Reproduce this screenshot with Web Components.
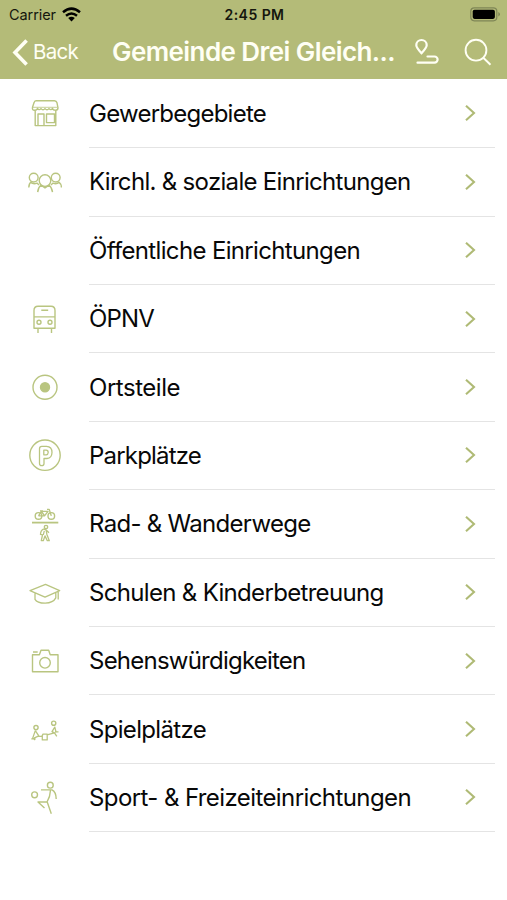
<!DOCTYPE html>
<html lang="de">
<head>
<meta charset="utf-8">
<title>Gemeinde Drei Gleichen</title>
<style>
    body {
        margin: 0;
        background: #fff;
        font-family: Inter, "Liberation Sans", sans-serif;
        --accent: #b4bb78;
        --icon: #b9c580;
    }
</style>
</head>
<body>
<category-page></category-page>

<script>
// Each icon: vertical shift inside its box, then its shapes
const ICONS = {
    shop: [1.3, `<path d="M16 10.5H34.5Q36.4 10.5 37 12.5L38 17.5Q38 20 35.5 20Q33 20 32.5 18Q31 20.5 29 18.3Q27 20.5 25 18.3Q23 20.5 21 18.3Q19 20.5 17.5 18Q17 20 14.5 20Q12 20 12.5 17L14 12.5Q14.5 10.5 16 10.5Z"/><path d="M13 17H37.5" stroke-width=".8"/><path d="M15.2 20V35.3H35.8V20M18 35V23.7H24V35M26.5 23.7H34.5V32.3H26.5Z"/>`],
    people: [.6, `<circle cx="25" cy="23" r="5.8"/><circle cx="13.7" cy="20" r="4.4"/><circle cx="35.7" cy="20" r="4.4"/><path d="M8.8 29.8Q8.8 26 11.2 24.2M10.6 24.8Q13.5 27 17 25.5L19 27.5M31 27.5L33 25.5Q36.5 27 39 24.8M38.4 24.2Q41.4 26 41.4 29.8M17.7 34.5Q18 29.8 21 27.6L25 30.4L29 27.6Q32 29.8 32.5 34.5"/>`],
    bus: [.9, `<path d="M14 33.3V15.5Q14 11.3 18 11.3H31Q35 11.3 35 15.5V33.3ZM14 22H35M21.3 15.4H28.2M18 33.5V38M31.5 33.5V38"/><circle cx="19" cy="27.4" r="2"/><circle cx="30" cy="27.4" r="2"/>`],
    place: [.5, `<circle cx="25" cy="23.7" r="12"/><circle cx="25" cy="23.7" r="4.5" fill="currentColor"/>`],
    parking: [-.8, `<circle cx="25" cy="25" r="15.2"/><path d="M19.5 18.5Q19.5 16.2 21.8 16.2H26.5Q32 16.5 32 22.2Q31.8 27.8 27 28.3H24V33.5Q23.8 35.5 21.7 35.5Q19.5 35.3 19.5 33.2ZM23.8 20H26.2Q28.2 20.2 28.2 22.3Q28.1 24.4 26.2 24.6H23.8Z" stroke-width="1.3"/>`],
    routes: [-1.1, `<path d="M12 24.7H38.3" stroke-width="1.8"/><circle cx="18.5" cy="18" r="3.3"/><circle cx="31.3" cy="18" r="3.3"/><path d="M18.5 18L21.5 13.5H28L24.5 18H18.5M21.5 13.5L24.5 18M27 11.5H29.2L31.3 18M20 13H23"/><circle cx="26" cy="29.2" r="1.7"/><path d="M23.8 31Q20.6 32.3 20.5 36.5L22.5 37L21.3 42.8H23.3L25 38L27.3 42.8H29.3L26.8 36.3L26.2 32.2L29 34.8M23.8 31L26.2 32.2M23.3 37L24.3 33" stroke-width="1.3"/>`],
    school: [.4, `<path d="M10 22.2L25.5 16L39.7 22.2L25 28.8ZM15 25V31Q17 34.8 25.2 34.8Q33.2 34.5 35.8 29.5V24.5M38.2 23.5V31" stroke-width="1.3"/>`],
    camera: [.2, `<path d="M12.5 18.5H19.4L21 14H28.7L30.2 18.5H38V35.5H12.5ZM13 15.8H17.7"/><circle cx="25" cy="26.6" r="5.3"/>`],
    playground: [-.4, `<circle cx="16" cy="23" r="2.1"/><circle cx="33.7" cy="18.6" r="2.1"/><path d="M15.3 26L12.7 33.5L15.3 35.3M15.3 26L18.8 31.3L14 33.5M11.3 34.2H15.5M18 31.8L22 31.5L23 29.5H27.2V35.3H22.3V31.5M27 30.2L34.5 28.3L32 27L34.8 22.5L36.2 28M34.5 28.3L36.8 31.8M35 27.2H38.5" stroke-width="1.3"/>`],
    sport: [-.8, `<circle cx="30.3" cy="13" r="2.9"/><circle cx="14.6" cy="22.6" r="2.9"/><path d="M21 17.7H32Q36 19.5 36.2 26.7M30.5 18Q30.2 24.5 27 29.8H18L24.5 35.8M27.3 30L31.3 41.5" stroke-width="1.4"/>`]
};

const CATEGORIES = [
    ["shop", "Gewerbegebiete", 177],
    ["people", "Kirchl. & soziale Einrichtungen", 321.5],
    ["", "Öffentliche Einrichtungen", 271],
    ["bus", "ÖPNV", 65],
    ["place", "Ortsteile", 91],
    ["parking", "Parkplätze", 112],
    ["routes", "Rad- & Wanderwege", 221.5],
    ["school", "Schulen & Kinderbetreuung", 294.5],
    ["camera", "Sehenswürdigkeiten", 216.5],
    ["playground", "Spielplätze", 117],
    ["sport", "Sport- & Freizeiteinrichtungen", 322]
];

// Spreads a label's letters so that it fills the given width
function fitText(el, width, length = el.textContent.length) {
    const natural = el.getBoundingClientRect().width;
    el.style.letterSpacing = (width - natural) / length + "px";
}

class StatusBar extends HTMLElement {
    constructor() {
        super();
        this.attachShadow({ mode: "open" });
    }

    connectedCallback() {
        this.shadowRoot.innerHTML = `
            <style>
                :host {
                    display: grid;
                    grid-template-columns: 1fr auto 1fr;
                    align-items: center;
                    height: 27px;
                    padding: 0 7px 0 9px;
                    box-sizing: border-box;
                    color: #15160d;
                    font-size: 14.5px;
                    line-height: 27px;
                }
                .carrier { display: flex; align-items: center; gap: 6px; }
                .time { font-weight: 600; font-size: 14px; padding-top: 1px; }
                .battery { justify-self: end; }
                svg { display: block; }
            </style>
            <div class="carrier">
                <span>Carrier</span>
                <svg width="19" height="15" viewBox="0 0 19 15" fill="none" stroke="#000" stroke-width="2.5">
                    <path d="M1 5.2Q9.5 -2 18 5.2M4 8.7Q9.5 4.2 15 8.7"/>
                    <path d="M6.2 11.1Q9.5 8.6 12.8 11.1L9.5 14.4Z" fill="#000" stroke="none"/>
                </svg>
            </div>
            <span class="time">2:45 PM</span>
            <svg class="battery" width="30" height="15" viewBox="0 0 30 15">
                <rect x=".8" y=".8" width="26" height="13" rx="3.5" fill="none" stroke="#7f8656" stroke-width="1.2"/>
                <rect x="2.7" y="2.7" width="22.2" height="9.2" rx="1.8"/>
                <path d="M28.3 5Q30 6 30 7.3Q30 8.6 28.3 9.6Z" fill="#7f8656"/>
            </svg>
        `;
        fitText(this.shadowRoot.querySelector(".carrier span"), 47);
        fitText(this.shadowRoot.querySelector(".time"), 60);
    }
}

class NavBar extends HTMLElement {
    constructor() {
        super();
        this.attachShadow({ mode: "open" });
    }

    connectedCallback() {
        this.shadowRoot.innerHTML = `
            <style>
                :host {
                    display: flex;
                    align-items: center;
                    height: 52px;
                    padding: 0 15px 2px 12px;
                    box-sizing: border-box;
                    color: #fffff4;
                }
                .back {
                    display: flex;
                    align-items: center;
                    gap: 4px;
                    width: 100px;
                    font-size: 20.5px;
                    line-height: 50px;
                }
                .title {
                    flex: 1;
                    font-size: 26px;
                    font-weight: 600;
                    line-height: 50px;
                    white-space: nowrap;
                }
                svg { display: block; fill: none; stroke: currentColor; }
                .route { margin-right: 24px; }
            </style>
            <div class="back">
                <svg width="17" height="27" viewBox="0 0 17 27" stroke-width="3.6"><path d="M14.6 1.5L3 13.5L14.6 25.5"/></svg>
                <span>Back</span>
            </div>
            <div class="title"><span>Gemeinde Drei Gleich...</span></div>
            <svg class="route" width="26" height="28" viewBox="0 0 26 28" stroke-width="2.2" stroke-linecap="round">
                <path d="M7.5 15.2Q2.3 9.5 2.3 7.2A5.2 5.2 0 0 1 12.7 7.2Q12.7 9.5 7.5 15.2Z"/>
                <path d="M13.5 18.5H20.5A3.1 3.1 0 0 1 20.5 24.7H3.5"/>
            </svg>
            <svg width="28" height="28" viewBox="0 0 28 28" stroke-width="1.9"><circle cx="12" cy="12.2" r="10.4"/><path d="M19.3 19.7L26.5 26.8"/></svg>
        `;
        fitText(this.shadowRoot.querySelector(".back span"), 45);
        fitText(this.shadowRoot.querySelector(".title span"), 283);
    }
}

class CategoryRow extends HTMLElement {
    constructor() {
        super();
        this.attachShadow({ mode: "open" });
    }

    connectedCallback() {
        const icon = ICONS[this.getAttribute("data-icon")];

        this.shadowRoot.innerHTML = `
            <style>
                :host {
                    display: flex;
                    height: 68.4px;
                    padding: 0 12px 0 20px;
                    box-sizing: border-box;
                    color: #080808;
                    font-size: 24px;
                }
                .icon {
                    flex: none;
                    display: flex;
                    align-items: center;
                    width: 69px;
                    color: var(--icon);
                }
                .content {
                    flex: 1;
                    display: flex;
                    align-items: center;
                    justify-content: space-between;
                    padding-right: 19px;
                    border-bottom: 1px solid #e4e4e4;
                    white-space: nowrap;
                }
                svg { display: block; fill: none; stroke: currentColor; }
                .chevron { color: #afba75; }
            </style>
            <div class="icon">
                ${icon ? `<svg width="60" height="50" viewBox="0 ${-icon[0]} 60 50" stroke-width="1.4" stroke-linejoin="round">${icon[1]}</svg>` : ""}
            </div>
            <div class="content">
                <span class="label"><slot></slot></span>
                <svg class="chevron" width="12" height="18" viewBox="0 0 12 18" stroke-width="2.1"><path d="M2 1.7L10 9L2 16.3"/></svg>
            </div>
        `;
        fitText(
            this.shadowRoot.querySelector(".label"),
            Number(this.getAttribute("data-width")),
            this.textContent.length
        );
    }
}

class CategoryPage extends HTMLElement {
    constructor() {
        super();
        this.attachShadow({ mode: "open" });
    }

    connectedCallback() {
        this.shadowRoot.innerHTML = `
            <style>
                :host { display: block; height: 900px; overflow: hidden; }
                header { background: var(--accent); }
                main { padding-top: .8px; }
            </style>
            <header>
                <status-bar></status-bar>
                <nav-bar></nav-bar>
            </header>
            <main>
                ${CATEGORIES.map(([icon, name, width]) =>
                    `<category-row data-icon="${icon}" data-width="${width}">${name.replace("&", "&amp;")}</category-row>`).join("")}
            </main>
        `;
    }
}

customElements.define("status-bar", StatusBar);
customElements.define("nav-bar", NavBar);
customElements.define("category-row", CategoryRow);
customElements.define("category-page", CategoryPage);
</script>
</body>
</html>
